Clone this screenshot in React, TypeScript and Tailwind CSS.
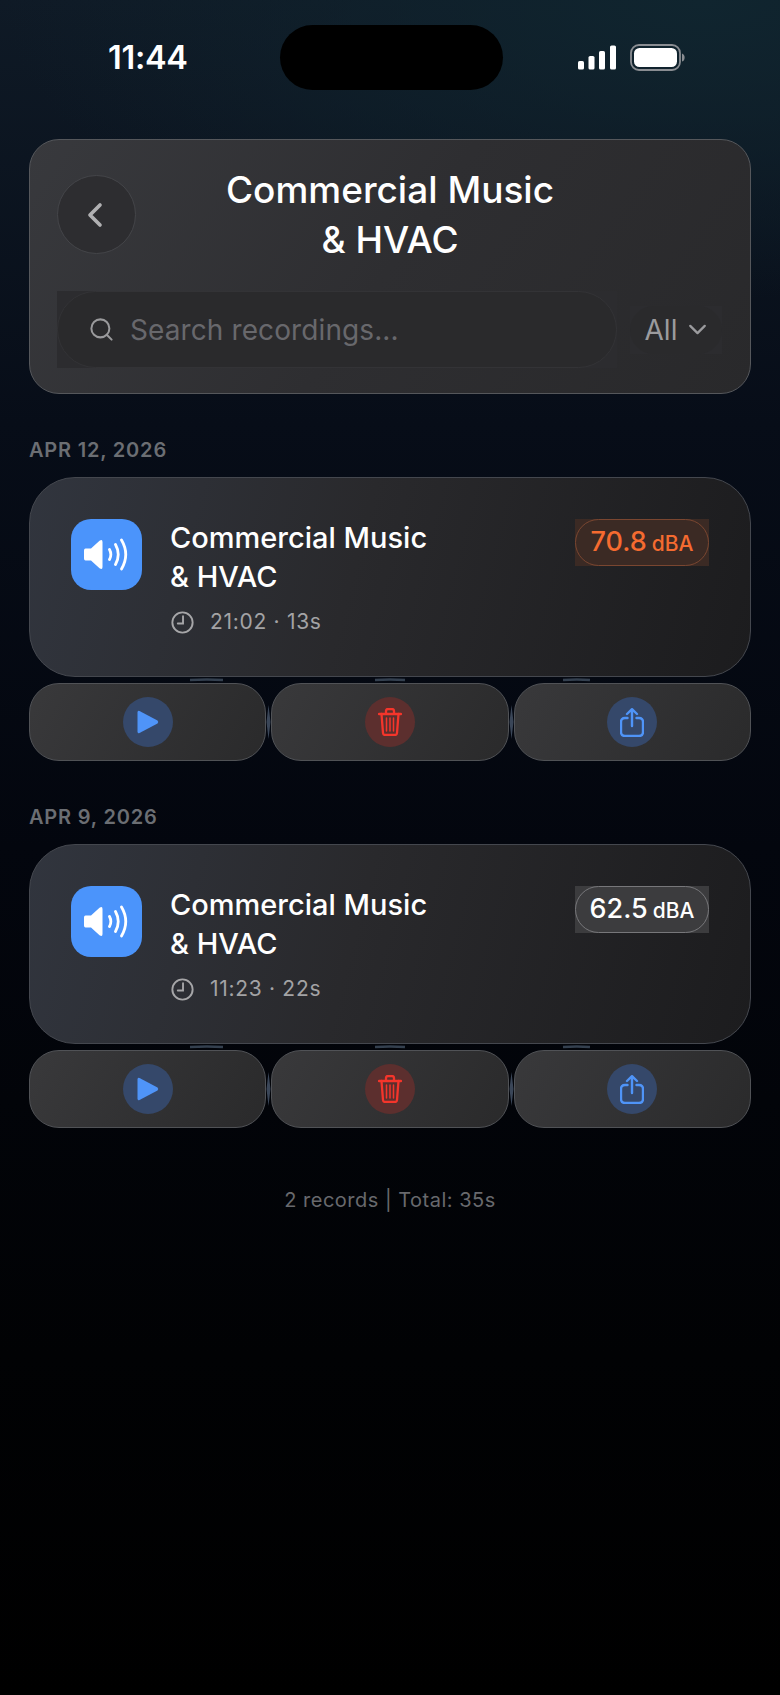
import { ChevronDown, ChevronLeft, Search } from 'lucide-react';

const StatusBar = () => (
  <div className="grid grid-cols-[280px_223px_277px] items-center pt-[25px]">
    <div className="pl-[108px] text-[32.5px] font-semibold leading-[65px] tracking-[-0.3px] text-white">
      11:44
    </div>
    <div className="h-[65px] w-[223px] rounded-[33px] bg-black" />
    <div className="flex items-center gap-[13px] pl-[75px]">
      <svg width="39" height="25" viewBox="0 0 39 25" fill="white">
        <rect x="0" y="16" width="6" height="8.5" rx="1.6" />
        <rect x="10.5" y="11" width="6" height="13.5" rx="1.6" />
        <rect x="21" y="6" width="6" height="18.5" rx="1.6" />
        <rect x="32" y="0.5" width="6" height="24" rx="1.6" />
      </svg>
      <svg width="55" height="27" viewBox="0 0 55 27" fill="none">
        <rect x="1" y="1" width="49" height="25" rx="8" stroke="#8a8d92" strokeWidth="1.8" />
        <rect x="4" y="4" width="43" height="19" rx="5.5" fill="white" />
        <path d="M52 9.5 C54 10 54.6 12 54.6 13.5 C54.6 15 54 17 52 17.5 Z" fill="#8a8d92" />
      </svg>
    </div>
  </div>
);

const Header = () => (
  <div className="mx-[29px] mt-[49px] h-[255px] rounded-[30px] border border-[#55575b] bg-[linear-gradient(125deg,#38393d_0%,#2e2e31_50%,#29292b_100%)] px-[27px] pt-[23px]">
    <div className="relative h-[113px]">
      <button className="absolute left-0 top-[12px] flex h-[79px] w-[79px] items-center justify-center rounded-full border border-[#444549] bg-[#2d2d30] text-[#b0b0b2]">
        <ChevronLeft size={40} strokeWidth={2.2} className="-ml-[3px]" />
      </button>
      <h1 className="pt-[2px] text-center text-[37px] font-medium leading-[50px] text-white">
        Commercial Music
        <br />
        &amp; HVAC
      </h1>
    </div>
    <div className="mt-[15px] flex items-center">
      <div className="h-[77px] w-[560px] bg-[#2c2c2f]">
        <div className="flex h-full items-center rounded-full border border-[#333336] bg-[#2a2a2c] pl-[30px]">
          <Search size={27} strokeWidth={1.8} className="text-[#9a9a9c]" />
          <span className="ml-[15px] text-[28px] leading-none tracking-[0.1px] text-[#68686c]">
            Search recordings...
          </span>
        </div>
      </div>
      <div className="ml-[13px] h-[48px] w-[92px] bg-[#2c2c2f]">
        <div className="flex h-full items-center justify-center gap-[6px] rounded-full bg-[#2a2a2c] pl-[5px] text-[#9b9b9e]">
          <span className="text-[28px] leading-none">All</span>
          <ChevronDown size={29} strokeWidth={1.9} />
        </div>
      </div>
    </div>
  </div>
);

const SpeakerIcon = () => (
  <svg width="46" height="33" viewBox="0 0 46 33" fill="none">
    <path
      d="M1.5 10.5 H7 L15.5 2.8 Q18.5 0.8 18.5 4 V29 Q18.5 32.2 15.5 30.2 L7 22.5 H1.5 Q0 22.5 0 20.5 V12.5 Q0 10.5 1.5 10.5Z"
      fill="white"
    />
    <path
      d="M25.5 11.5 Q28.2 16.5 25.5 21.5 M31.5 6.5 Q37 16.5 31.5 26.5 M37.5 2 Q46 16.5 37.5 31"
      stroke="white"
      strokeWidth="2.8"
      strokeLinecap="round"
    />
  </svg>
);

const ClockIcon = () => (
  <svg width="23" height="23" viewBox="0 0 22 22" fill="none" stroke="#a6a6a8" strokeWidth="1.8" strokeLinecap="round">
    <circle cx="11" cy="11" r="9.7" />
    <path d="M11.5 5 V12 H6.5" />
  </svg>
);

const PlayIcon = () => (
  <svg width="22" height="24" viewBox="0 0 22 24" fill="#4f94f8">
    <path d="M2.5 1 Q0.5 0 0.5 2.5 V21.5 Q0.5 24 2.5 23 L20.5 13.5 Q22 12 20.5 10.5Z" />
  </svg>
);

const TrashIcon = () => (
  <svg width="24" height="28" viewBox="0 0 24 28" fill="none" stroke="#f5352b" strokeWidth="2.3" strokeLinecap="round" strokeLinejoin="round">
    <path d="M1 6 H23 M8 6 V3 Q8 1 10 1 H14 Q16 1 16 3 V6" />
    <path d="M3.5 6 L5 25 Q5.2 27 7.2 27 H16.8 Q18.8 27 19 25 L20.5 6" />
    <path d="M8.5 10 V23 M12 10 V23 M15.5 10 V23" strokeWidth="1.5" />
  </svg>
);

const ShareIcon = () => (
  <svg width="24" height="29" viewBox="0 0 24 29" fill="none" stroke="#4f94f8" strokeWidth="2.4" strokeLinecap="round" strokeLinejoin="round">
    <path d="M12 18 V1.5 M7 6 L12 1.2 L17 6" />
    <path d="M7.5 10 H5 Q1 10 1 14 V24 Q1 28 5 28 H19 Q23 28 23 24 V14 Q23 10 19 10 H16.5" />
  </svg>
);

const Action = ({ tint, children }: { tint: string; children: React.ReactNode }) => (
  <button className="flex h-[78px] flex-1 items-center justify-center rounded-[30px] border border-[#505256] bg-[linear-gradient(120deg,#39393b_0%,#2a2a2b_100%)]">
    <span className={`flex h-[50px] w-[50px] items-center justify-center rounded-full ${tint}`}>
      {children}
    </span>
  </button>
);

type Rec = {
  date: string;
  time: string;
  db: string;
  box: string;
  pill: string;
};

const RecordCard = ({ rec }: { rec: Rec }) => (
  <section className="px-[29px]">
    <p className="text-[20px] font-semibold leading-[24px] tracking-[0.8px] text-[#6b6e73]">
      {rec.date}
    </p>
    <div className="mt-[15px] flex h-[200px] rounded-[46px] border border-[#44474e] bg-[linear-gradient(105deg,#31353e_0%,#29292c_45%,#1c1c1e_100%)] px-[41px] pt-[41px]">
      <div className="flex h-[71px] w-[71px] shrink-0 items-center justify-center rounded-[20px] bg-[#4b94fb]">
        <SpeakerIcon />
      </div>
      <div className="ml-[28px] flex-1">
        <h2 className="-mt-[1px] text-[29px] font-medium leading-[39px] text-white">
          Commercial Music
          <br />
          &amp; HVAC
        </h2>
        <div className="mt-[14px] flex items-center gap-[16px] pl-[1px] text-[21px] leading-[24px] tracking-[0.7px] text-[#a3a3a5]">
          <ClockIcon />
          <span>{rec.time}</span>
        </div>
      </div>
      <div className={`h-[47px] w-[134px] ${rec.box}`}>
        <div className={`flex h-full items-baseline justify-center gap-[5px] rounded-full border pt-[6px] ${rec.pill}`}>
          <span className="text-[27px] font-medium leading-[32px]">{rec.db}</span>
          <span className="text-[21px] font-medium leading-[24px]">dBA</span>
        </div>
      </div>
    </div>
    <div className="relative mt-[6px] flex gap-[5px]">
      <Action tint="bg-[#35486a]">
        <PlayIcon />
      </Action>
      <Action tint="bg-[#5c2f2e]">
        <TrashIcon />
      </Action>
      <Action tint="bg-[#35486a]">
        <ShareIcon />
      </Action>
      {/* the blobby joins where the glass shapes melt together */}
      <svg
        width="722"
        height="86"
        viewBox="0 0 722 86"
        fill="none"
        className="pointer-events-none absolute left-0 top-[-8px]"
      >
        <path d="M161 5 Q178 4 194 5 M346 5 Q361 4 376 5 M534 5 Q548 4 561 5" stroke="#34404f" strokeWidth="2.5" />
        <path d="M239.5 30 L241.5 47 L239.5 64 L237.5 47Z M482.5 30 L484.5 47 L482.5 64 L480.5 47Z" fill="#3a4658" />
      </svg>
    </div>
  </section>
);

const records: Rec[] = [
  {
    date: 'APR 12, 2026',
    time: '21:02 · 13s',
    db: '70.8',
    box: 'bg-[#3b2a24]',
    pill: 'border-[#7a4630] text-[#f56b30]',
  },
  {
    date: 'APR 9, 2026',
    time: '11:23 · 22s',
    db: '62.5',
    box: 'bg-[#3c3c3e]',
    pill: 'border-[#77777a] text-white',
  },
];

export default function App() {
  return (
    <div className="h-[1695px] w-[780px] overflow-hidden bg-[radial-gradient(ellipse_700px_300px_at_90%_0%,#10252f_0%,transparent_100%),linear-gradient(180deg,#0f1a26_0%,#070d18_25%,#03060e_50%,#010204_80%,#000000_100%)] font-['Inter',sans-serif]">
      <StatusBar />
      <Header />
      <div className="mt-[44px] flex flex-col gap-[44px]">
        {records.map((rec) => (
          <RecordCard key={rec.date} rec={rec} />
        ))}
      </div>
      <p className="mt-[60px] text-center text-[20px] leading-[24px] tracking-[0.5px] text-[#68696d]">
        2 records | Total: 35s
      </p>
    </div>
  );
}
